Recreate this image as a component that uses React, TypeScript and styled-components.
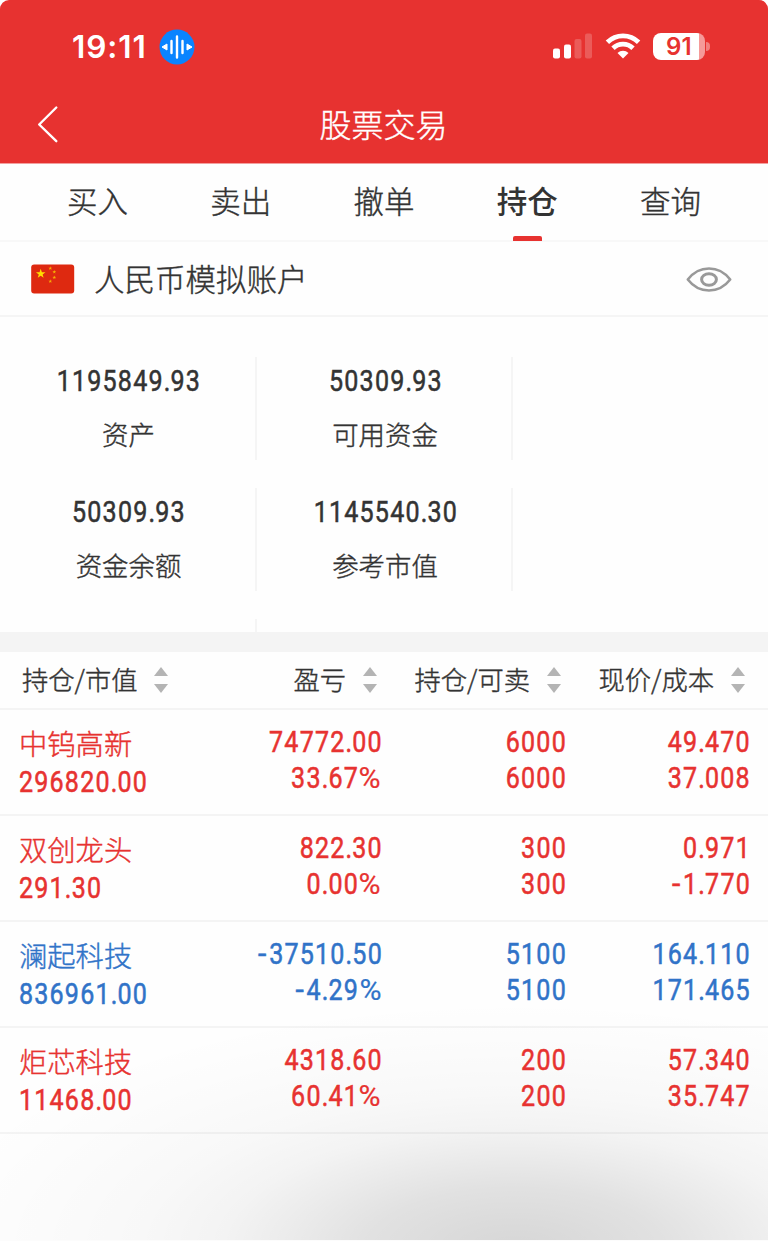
import React from 'react';
import styled, { createGlobalStyle } from 'styled-components';

const RED = '#e73230';
const BLUE = '#3073c8';

const GlobalStyle = createGlobalStyle`
  * { box-sizing: border-box; }
  html, body { margin: 0; background: #fff; }
  body {
    font-family: "Noto Sans CJK SC", sans-serif;
    font-weight: 300;
    color: #333;
    -webkit-text-stroke: 0.4px currentColor;
  }
`;

const Screen = styled.div`
  width: 768px;
  height: 1241px;
  overflow: hidden;
  display: flex;
  flex-direction: column;
  background:
    linear-gradient(#fcfcfc, #fcfcfc) 0 100% / 100% 1px no-repeat,
    radial-gradient(ellipse 600px 250px at 515px 1250px, rgba(0,0,0,0.155) 0%, rgba(0,0,0,0.137) 12%, rgba(0,0,0,0.112) 25%, rgba(0,0,0,0.075) 38%, rgba(0,0,0,0.045) 49%, rgba(0,0,0,0.024) 63%, rgba(0,0,0,0.011) 80%, rgba(0,0,0,0) 100%),
    #fefefe;
`;

const Header = styled.header`
  height: 163px;
  flex: none;
  background: ${RED};
  border-radius: 9px 9px 0 0;
  box-shadow: 0 1px 0 #f3a09f;
  color: #fff;
`;

const StatusBar = styled.div`
  height: 86px;
  padding: 7px 58px 0 72px;
  display: flex;
  align-items: center;
  -webkit-text-stroke: 0;
`;

const Time = styled.span`
  font: 600 31.5px/36px Inter, sans-serif;
  width: 87px;
  letter-spacing: 0.9px;
  white-space: nowrap;
`;

const StatusIcons = styled.div`
  margin-left: auto;
  display: flex;
  align-items: center;
  padding-bottom: 1px;
`;

const Battery = styled.div`
  margin-left: 12px;
  width: 52px;
  height: 27px;
  border-radius: 8px;
  background: linear-gradient(90deg, #fff 46px, #f59a99 46px);
  color: ${RED};
  font: 600 24px/27px Inter, sans-serif;
  text-align: center;
  letter-spacing: 0.3px;
`;

const BatteryTip = styled.div`
  width: 4px;
  height: 9px;
  margin-left: 1px;
  border-radius: 0 5px 5px 0;
  background: #f17f7e;
`;

const NavBar = styled.div`
  height: 77px;
  display: grid;
  grid-template-columns: 100px 1fr 100px;
  align-items: center;
`;

const BackIcon = styled.svg`
  margin: 0 0 1px 36px;
`;

const Title = styled.h1`
  margin: 0 1px 4px 0;
  text-align: center;
  font-weight: 300;
  font-size: 32px;
  line-height: 40px;
`;

const Tabs = styled.nav`
  height: 79px;
  flex: none;
  padding: 1px 26px 0 26px;
  display: grid;
  grid-template-columns: repeat(5, 1fr);
  border-bottom: 2px solid #f8f8f8;
`;

const Tab = styled.div<{ $active?: boolean }>`
  display: flex;
  flex-direction: column;
  align-items: center;
  justify-content: space-between;
  font-size: 30.5px;
  line-height: 72px;
  height: 77px;
  font-weight: ${p => (p.$active ? 500 : 300)};
  -webkit-text-stroke-width: ${p => (p.$active ? '0' : '0.4px')};
  &::after {
    content: "";
    flex: none;
    width: 29px;
    height: 5px;
    border-radius: 2px 2px 0 0;
    background: ${p => (p.$active ? RED : 'transparent')};
  }
`;

const Account = styled.div`
  height: 75px;
  flex: none;
  padding: 0 36px 0 31px;
  display: flex;
  align-items: center;
  border-bottom: 2px solid #f5f5f5;
`;

const AccountName = styled.span`
  margin: 0 0 1px 19px;
  font-size: 30.5px;
  line-height: 40px;
  flex: 1;
`;

const Summary = styled.section`
  height: 315px;
  flex: none;
  overflow: hidden;
  padding-top: 40px;
  display: grid;
  grid-template-columns: 257px 256px 255px;
  grid-auto-rows: 103px;
  row-gap: 28px;
`;

const SummaryCell = styled.div<{ $divided?: boolean }>`
  display: flex;
  flex-direction: column;
  align-items: center;
  padding: 6px 0 0 2px;
  border-right: ${p => (p.$divided ? '2px solid #f5f5f5' : '0')};
`;

const SummaryLabel = styled.span`
  margin-top: 16px;
  font-size: 26.4px;
  line-height: 38px;
`;

const Figure = styled.span<{ $origin: string }>`
  display: inline-block;
  font: 400 29.5px/36px Roboto, sans-serif;
  letter-spacing: 1.4px;
  margin-right: -0.9px;
  white-space: nowrap;
  -webkit-text-stroke: 0.55px currentColor;
  transform: scaleX(0.85);
  transform-origin: ${p => p.$origin} 50%;
`;

const Dot = styled.span`
  letter-spacing: 0.2px;
`;

const Minus = styled.span`
  display: inline-block;
  margin-right: 2.5px;
  transform: scaleX(1.2);
`;

const Percent = styled.span`
  display: inline-block;
  margin-left: 4.5px;
  font-weight: 400;
  -webkit-text-stroke-width: 0.2px;
  transform: scaleX(1.2);
  transform-origin: right;
`;

const Gap = styled.div`
  height: 20px;
  flex: none;
  background: #f4f4f4;
`;

const columns = '193px 189px 184px 184px';

const TableHead = styled.div`
  height: 58px;
  flex: none;
  display: grid;
  grid-template-columns: ${columns};
  border-bottom: 2px solid #f4f4f4;
`;

const HeadCell = styled.div<{ $first?: boolean }>`
  display: flex;
  align-items: center;
  justify-content: ${p => (p.$first ? 'flex-start' : 'flex-end')};
  padding: 0 ${p => (p.$first ? '0 0 22px' : '5.5px 0 0')};
  gap: 16.5px;
  font-size: 26.3px;
  white-space: nowrap;
`;

const HeadLabel = styled.span`
  padding-bottom: 3px;
`;

const Row = styled.div`
  height: 106px;
  flex: none;
  display: grid;
  grid-template-columns: ${columns};
  border-bottom: 2px solid rgba(0, 0, 0, 0.04);
`;

const HoldingCell = styled.div<{ $color: string }>`
  display: flex;
  flex-direction: column;
  align-items: flex-start;
  padding: 13.5px 0 0 19px;
  color: ${p => p.$color};
`;

const StockName = styled.span`
  font-size: 28.3px;
  line-height: 38px;
  margin-bottom: 2px;
`;

const ValueCell = styled.div<{ $color: string }>`
  display: flex;
  flex-direction: column;
  align-items: flex-end;
  padding-top: 13.5px;
  color: ${p => p.$color};
`;

function Num({ value, origin = 'right' }: { value: string; origin?: string }) {
  const parts = value.split(/([-.%])/).filter(Boolean);
  return (
    <Figure $origin={origin}>
      {parts.map((part, i) => {
        if (part === '.') return <Dot key={i}>.</Dot>;
        if (part === '-') return <Minus key={i}>-</Minus>;
        if (part === '%') return <Percent key={i}>%</Percent>;
        return part;
      })}
    </Figure>
  );
}

function SortIcon() {
  return (
    <svg width="14" height="28" viewBox="0 0 14 28" fill="#b4b4b4">
      <path d="M7 1 14 10H0Z" />
      <path d="M7 27 0 18h14Z" />
    </svg>
  );
}

function VoiceIcon() {
  return (
    <svg width="36" height="36" viewBox="0 0 36 36">
      <circle cx="18" cy="18" r="17.5" fill="#0a84ff" />
      <g stroke="#fff" strokeWidth="2.4" strokeLinecap="round">
        <path d="M12.5 12v12M18 7.500v21M23.500 12v12" />
      </g>
      <path d="M3 18 8 15v6ZM33 18 28 15v6Z" fill="#fff" stroke="#fff" strokeWidth="1" strokeLinejoin="round" />
    </svg>
  );
}

function SignalIcon() {
  return (
    <svg width="40" height="26" viewBox="0 0 40 26" fill="#fff">
      <rect x="0" y="15.500" width="7" height="10" rx="2" />
      <rect x="11" y="11.500" width="7" height="14" rx="2" />
      <rect x="21.500" y="6" width="7" height="19.500" rx="2" opacity=".2" />
      <rect x="32" y="0.500" width="7" height="25" rx="2" opacity=".2" />
    </svg>
  );
}

const WifiSvg = styled.svg`
  margin-left: 12px;
`;

function WifiIcon() {
  return (
    <WifiSvg width="36" height="26" viewBox="0 0 36 26">
      <g fill="none" stroke="#fff" strokeWidth="4.800">
        <path d="M2.400 9.200A22.300 22.300 0 0 1 33.600 9.200" />
        <path d="M8 15.200A14.300 14.300 0 0 1 28 15.200" />
      </g>
      <path d="M18 25.500 12.500 20a8 8 0 0 1 11 0Z" fill="#fff" />
    </WifiSvg>
  );
}

function starPoints(cx: number, cy: number, r: number) {
  return Array.from({ length: 10 }, (_, i) => {
    const radius = i % 2 ? r * 0.4 : r;
    const a = (Math.PI * i) / 5 - Math.PI / 2;
    return `${cx + radius * Math.cos(a)},${cy + radius * Math.sin(a)}`;
  }).join(' ');
}

function Flag() {
  return (
    <svg width="44" height="30" viewBox="0 0 44 30">
      <rect x="0.200" y="0.500" width="43" height="29" rx="3" fill="#de2910" />
      <g fill="#ffde00">
        <polygon points={starPoints(9.700, 9.800, 5)} />
        <g opacity=".75">
          <polygon points={starPoints(19.300, 4.300, 2)} />
          <polygon points={starPoints(23.300, 8, 2)} />
          <polygon points={starPoints(23.300, 13.500, 2)} />
          <polygon points={starPoints(19.300, 17.300, 2)} />
        </g>
      </g>
    </svg>
  );
}

function EyeIcon() {
  return (
    <svg width="46" height="26" viewBox="0 0 46 26" fill="none" stroke="#999" strokeWidth="2.600">
      <path d="M1.800 13.500C8 5.500 15 2.500 23 2.500S38 5.500 44.200 13.500C38 21.500 31 24.500 23 24.500S8 21.500 1.800 13.500Z" strokeLinejoin="round" />
      <ellipse cx="23" cy="13.500" rx="7.400" ry="5.800" strokeWidth="3" />
    </svg>
  );
}

const tabs = ['买入', '卖出', '撤单', '持仓', '查询'];

const heads = ['持仓/市值', '盈亏', '持仓/可卖', '现价/成本'];

const holdings = [
  { name: '中钨高新', value: '296820.00', pl: ['74772.00', '33.67%'], qty: ['6000', '6000'], price: ['49.470', '37.008'], color: RED },
  { name: '双创龙头', value: '291.30', pl: ['822.30', '0.00%'], qty: ['300', '300'], price: ['0.971', '-1.770'], color: RED },
  { name: '澜起科技', value: '836961.00', pl: ['-37510.50', '-4.29%'], qty: ['5100', '5100'], price: ['164.110', '171.465'], color: BLUE },
  { name: '炬芯科技', value: '11468.00', pl: ['4318.60', '60.41%'], qty: ['200', '200'], price: ['57.340', '35.747'], color: RED },
];

const summary = [
  ['1195849.93', '资产'],
  ['50309.93', '可用资金'],
  null,
  ['50309.93', '资金余额'],
  ['1145540.30', '参考市值'],
  null,
];

export default function App() {
  return (
    <>
      <GlobalStyle />
      <Screen>
        <Header>
          <StatusBar>
            <Time>19:11</Time>
            <VoiceIcon />
            <StatusIcons>
              <SignalIcon />
              <WifiIcon />
              <Battery>91</Battery>
              <BatteryTip />
            </StatusIcons>
          </StatusBar>
          <NavBar>
            <BackIcon width="24" height="38" viewBox="0 0 24 38" fill="none" stroke="#fff" strokeWidth="2.4" strokeLinecap="round" strokeLinejoin="round">
              <path d="M20.300 2.500 3.200 19.500 20.300 36.200" />
            </BackIcon>
            <Title>股票交易</Title>
          </NavBar>
        </Header>
        <Tabs>
          {tabs.map(t => <Tab key={t} $active={t === '持仓'}>{t}</Tab>)}
        </Tabs>
        <Account>
          <Flag />
          <AccountName>人民币模拟账户</AccountName>
          <EyeIcon />
        </Account>
        <Summary>
          {summary.map((item, i) =>
            item ? (
              <SummaryCell key={i} $divided>
                <Num value={item[0]} origin="center" />
                <SummaryLabel>{item[1]}</SummaryLabel>
              </SummaryCell>
            ) : (
              <SummaryCell key={i} />
            ),
          )}
          <SummaryCell $divided />
        </Summary>
        <Gap />
        <TableHead>
          {heads.map((h, i) => (
            <HeadCell key={h} $first={i === 0}>
              <HeadLabel>{h}</HeadLabel>
              <SortIcon />
            </HeadCell>
          ))}
        </TableHead>
        {holdings.map(h => (
          <Row key={h.name}>
            <HoldingCell $color={h.color}>
              <StockName>{h.name}</StockName>
              <Num value={h.value} origin="left" />
            </HoldingCell>
            {[h.pl, h.qty, h.price].map((pair, i) => (
              <ValueCell key={i} $color={h.color}>
                <Num value={pair[0]} />
                <Num value={pair[1]} />
              </ValueCell>
            ))}
          </Row>
        ))}
      </Screen>
    </>
  );
}
